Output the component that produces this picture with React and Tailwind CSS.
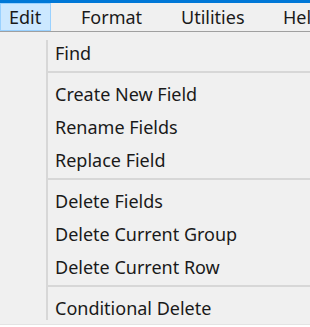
import React from "react";

// widths put each title where the window has it
const MENUS = [
  { label: "Format", w: "w-[100px]" },
  { label: "Utilities", w: "w-[102px]" },
  { label: "Help", w: "w-[60px]" },
];

// groups of items, a separator goes between each group
const GROUPS = [
  ["Find"],
  ["Create New Field", "Rename Fields", "Replace Field"],
  ["Delete Fields", "Delete Current Group", "Delete Current Row"],
  ["Conditional Delete"],
];

const MenuItem = ({ label, first }) => (
  <div
    className={`${first ? "h-[30px] pb-[3px]" : "h-[33px]"} shrink-0 flex items-center pl-[7px] text-[18px] text-[#1a1a1a] whitespace-nowrap`}
  >
    {label}
  </div>
);

const Separator = () => (
  <div className="shrink-0 mt-[1px] mb-[5px] h-[2px] bg-[#d7d7d7]" />
);

export default function App() {
  return (
    <div
      className="w-[310px] h-[327px] overflow-hidden bg-[#f0f0f0] flex flex-col"
      style={{ fontFamily: '"Noto Sans", "Open Sans", sans-serif' }}
    >
      {/* window title strip */}
      <div className="h-[3px] bg-[#0078d7] shrink-0" />

      {/* menu bar */}
      <div className="h-[29px] shrink-0 flex items-stretch border-b border-[#a0a0a0] text-[18px] text-[#1a1a1a] whitespace-nowrap">
        <div className="w-[51px] shrink-0 pl-[8px] flex items-center bg-[#cce8ff] border border-[#99d1ff]">
          Edit
        </div>
        <div className="w-[10px] shrink-0" />
        {MENUS.map((m) => (
          <div key={m.label} className={`${m.w} shrink-0 pl-[20px] flex items-center`}>
            {m.label}
          </div>
        ))}
      </div>

      {/* dropdown */}
      <div className="mt-[8px] h-[280px] shrink-0 flex overflow-hidden">
        <div className="w-[46px] shrink-0" />
        <div className="w-[2px] shrink-0 bg-[#d7d7d7]" />
        <div className="flex-1 flex flex-col">
          {GROUPS.map((group, gi) => (
            <React.Fragment key={gi}>
              {gi > 0 && <Separator />}
              {group.map((item) => (
                <MenuItem key={item} label={item} first={gi === 0} />
              ))}
            </React.Fragment>
          ))}
        </div>
      </div>

      <div className="mt-[4px] h-[1px] bg-[#e3e3e3] shrink-0" />
      <div className="flex-1 bg-white" />
    </div>
  );
}
